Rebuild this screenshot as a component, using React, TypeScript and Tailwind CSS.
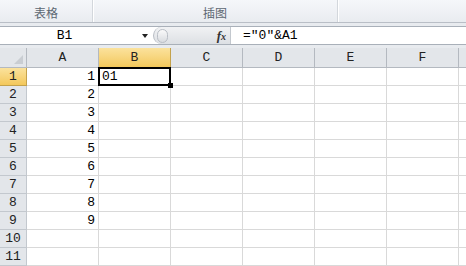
import React from 'react';

const cols = ['A', 'B', 'C', 'D', 'E', 'F'];
const rows = [1, 2, 3, 4, 5, 6, 7, 8, 9, 10, 11];

const mono = { fontFamily: '"Liberation Mono", "Noto Sans CJK SC", monospace' };

const App: React.FC = () => {
    return (
        <div className="w-[466px] h-[266px] overflow-hidden bg-white select-none" style={mono}>
            {/* Ribbon group labels */}
            <div className="h-[23px] flex bg-gradient-to-b from-[#f5f7fa] to-[#e9ecf0] border-b border-[#b9bec6] text-[12px] text-[#5d6772]" style={{ fontFamily: '"Noto Sans CJK SC", sans-serif' }}>
                <div className="w-[93px] flex items-center justify-center pt-[3px] border-r border-[#d3d7dc] shadow-[1px_0_0_#ffffff]">表格</div>
                <div className="w-[245px] flex items-center justify-center pt-[3px] border-r border-[#d3d7dc] shadow-[1px_0_0_#ffffff]">插图</div>
                <div className="flex-1" />
            </div>

            {/* Formula bar */}
            <div className="bg-[#e8ebef] pt-[3px] pb-[3px]">
                <div className="h-[19px] flex bg-white border-y border-[#a9b0b9]">
                    <div className="w-[153px] relative flex items-center justify-center text-[13px] text-black">
                        <span className="-ml-[24px]">B1</span>
                        <span className="absolute right-[5px] top-[7px] w-0 h-0 border-x-[3px] border-x-transparent border-t-[4px] border-t-[#222]" />
                    </div>
                    <div className="w-[77px] flex items-center justify-between pr-[4px] rounded-l-full bg-gradient-to-b from-[#f1f2f4] to-[#dde0e4] border-l border-[#b8bdc4]">
                        <span className="ml-[3px] w-[11px] h-[14px] rounded-full bg-gradient-to-b from-[#fafafa] to-[#d9dce0] border border-[#b9bec5]" />
                        <span className="text-[13px] font-bold italic text-[#333]" style={{ fontFamily: '"Liberation Serif", serif' }}>f<span className="text-[10px]">x</span></span>
                    </div>
                    <div className="flex-1 flex items-center pl-[12px] border-l border-[#c3c8ce] text-[13px] text-black">
                        =″0″&amp;A1
                    </div>
                </div>
            </div>

            {/* Grid */}
            <div className="grid grid-cols-[27px_repeat(6,72px)_1fr] text-[13px]">
                <div className="h-[20px] relative bg-[#e3e6ea] border-r border-b border-[#b4b9c0]">
                    <span className="absolute right-[3px] bottom-[3px] w-0 h-0 border-l-[9px] border-l-transparent border-b-[9px] border-b-[#c9cdd2]" />
                </div>
                {cols.map((c) => (
                    <div
                        key={c}
                        className={
                            c === 'B'
                                ? 'h-[20px] flex items-center justify-center bg-gradient-to-b from-[#fbe29c] to-[#f3c85a] border-r border-b border-[#c4a24c] text-[#222]'
                                : 'h-[20px] flex items-center justify-center bg-[#e3e6ea] border-r border-b border-[#b4b9c0] text-[#222]'
                        }
                    >
                        {c}
                    </div>
                ))}
                <div className="h-[20px] bg-[#e3e6ea] border-b border-[#b4b9c0]" />

                {rows.map((r) => (
                    <React.Fragment key={r}>
                        <div
                            className={
                                r === 1
                                    ? 'h-[18px] flex items-center justify-center bg-gradient-to-b from-[#fbe29c] to-[#f3c85a] border-r border-b border-[#c4a24c] text-[#222]'
                                    : 'h-[18px] flex items-center justify-center bg-[#e3e6ea] border-r border-b border-[#c3c8ce] text-[#222]'
                            }
                        >
                            {r}
                        </div>
                        {cols.map((c) => (
                            <div key={c} className={c === 'B' && r === 1 ? 'h-[18px] relative z-10 flex items-center border-r border-b border-[#d9d9d9]' : 'h-[18px] relative flex items-center border-r border-b border-[#d9d9d9]'}>
                                {c === 'A' && r <= 9 && <span className="ml-auto mr-[3px]">{r}</span>}
                                {c === 'B' && r === 1 && (
                                    <>
                                        <span className="ml-[3px]">01</span>
                                        <span className="absolute -left-[1px] -top-[1px] -right-[1px] -bottom-[1px] border-2 border-black" />
                                        <span className="absolute -right-[3px] -bottom-[3px] w-[5px] h-[5px] bg-black" />
                                    </>
                                )}
                            </div>
                        ))}
                        <div className="h-[18px] border-b border-[#d9d9d9]" />
                    </React.Fragment>
                ))}
            </div>
        </div>
    );
};

export default App;
